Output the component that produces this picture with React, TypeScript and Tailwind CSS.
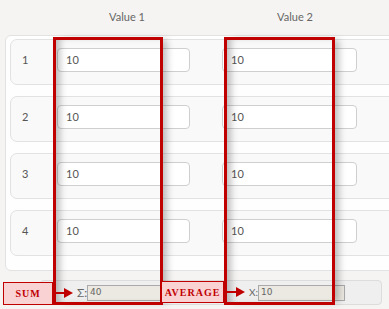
const rows = [1, 2, 3, 4];

function Arrow({ w }: { w: number }) {
  return (
    <svg width={w} height="10" viewBox={`0 0 ${w} 10`}>
      <line x1="0" y1="5" x2={w - 8} y2="5" stroke="#c00000" strokeWidth="2" />
      <polygon points={`${w - 9},0 ${w},5 ${w - 9},10`} fill="#c00000" />
    </svg>
  );
}

function Callout({ children, className }: { children: React.ReactNode; className: string }) {
  return (
    <div
      className={`absolute flex items-center justify-center border-[1.5px] border-[#c00000] bg-[#f9d2d4] text-[10px] font-bold tracking-[1px] text-[#c00000] [font-family:'Liberation_Serif',serif] ${className}`}
    >
      {children}
    </div>
  );
}

export default function App() {
  return (
    <div className="relative h-[309px] w-[389px] overflow-hidden bg-[#f5f4f2] text-[11px] text-[#555] [font-family:Lato,'Open_Sans',sans-serif]">
      {/* column headers */}
      <div className="flex h-[35px] items-center text-[#666]">
        <div className="ml-[59px] w-[136px] text-center">Value 1</div>
        <div className="ml-[32px] w-[136px] text-center">Value 2</div>
      </div>

      {/* rows */}
      <div className="ml-[5px] flex h-[236px] w-[420px] flex-col gap-[11px] rounded-[6px] border border-[#e2e2e2] bg-[#fefefe] pl-[4px] pt-[3px]">
        {rows.map((n) => (
          <div
            key={n}
            className="flex h-[46px] w-[420px] shrink-0 items-start rounded-[7px] border border-[#e2e2e2] bg-[#f9f9f9] pt-[8px]"
          >
            <div className="flex h-[24px] w-[46px] items-center pl-[11px]">{n}</div>
            <div className="flex h-[24px] w-[133px] items-center rounded-[4px] border border-[#cfcfcf] bg-white pl-[8px]">10</div>
            <div className="ml-[32px] flex h-[24px] w-[135px] items-center rounded-[4px] border border-[#cfcfcf] bg-white pl-[8px]">10</div>
          </div>
        ))}
      </div>

      {/* totals */}
      <div className="ml-[40px] mt-[9px] flex h-[25px] w-[342px] items-center rounded-[4px] border border-[#dcdcdc] bg-[#efefef] pl-[36px] text-[10px] text-[#666]">
        <span className="w-[10px] text-[12px]">Σ:</span>
        <div className="flex h-[16px] w-[87px] items-center border border-[#a9a9a9] bg-[#ebe9e1] pl-[2px] [font-family:'DejaVu_Sans',sans-serif] text-[9px]">40</div>
        <span className="ml-[75px] w-[9px]">X:</span>
        <div className="flex h-[16px] w-[87px] items-center border border-[#a9a9a9] bg-[#ebe9e1] pl-[2px] [font-family:'DejaVu_Sans',sans-serif] text-[9px]">10</div>
      </div>

      {/* annotations */}
      <div className="absolute left-[53px] top-[37px] h-[268px] w-[110px] border-[3px] border-[#c00000] shadow-[inset_7px_0_7px_-3px_rgba(0,0,0,0.25),7px_0_7px_-3px_rgba(0,0,0,0.25)]" />
      <div className="absolute left-[224px] top-[37px] h-[268px] w-[111px] border-[3px] border-[#c00000] shadow-[inset_7px_0_7px_-3px_rgba(0,0,0,0.25),7px_0_7px_-3px_rgba(0,0,0,0.25)]" />

      <Callout className="left-[3px] top-[282px] h-[23px] w-[50px]">SUM</Callout>
      <div className="absolute left-[53px] top-[288px]">
        <Arrow w={20} />
      </div>

      <Callout className="left-[161px] top-[281px] h-[22px] w-[63px]">AVERAGE</Callout>
      <div className="absolute left-[225px] top-[287px]">
        <Arrow w={20} />
      </div>
    </div>
  );
}
